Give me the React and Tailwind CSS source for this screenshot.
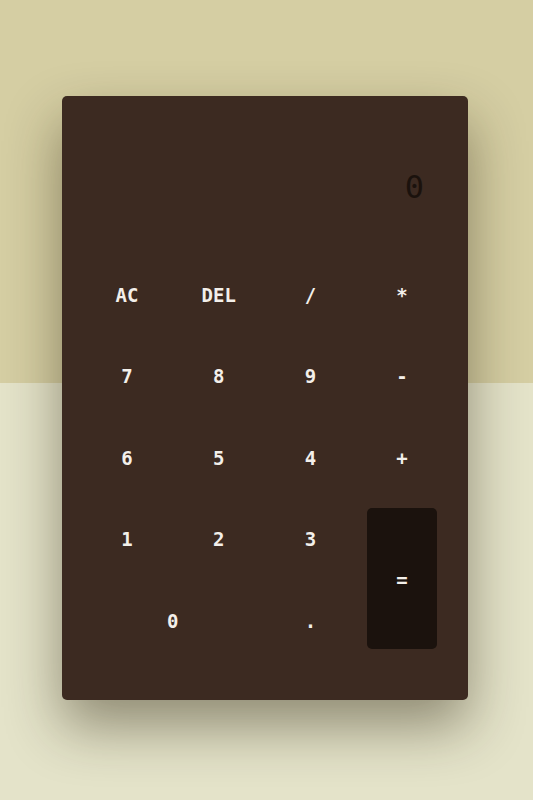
import React, { useState } from "react";

const keys = [
  { label: "AC" },
  { label: "DEL" },
  { label: "/" },
  { label: "*" },
  { label: "7" },
  { label: "8" },
  { label: "9" },
  { label: "-" },
  { label: "6" },
  { label: "5" },
  { label: "4" },
  { label: "+" },
  { label: "1" },
  { label: "2" },
  { label: "3" },
  { label: "=", cls: "row-span-2 bg-[#1b120d] rounded-[5px]" },
  { label: "0", cls: "col-span-2" },
  { label: "." },
];

const App = () => {
  const [value] = useState("0");

  return (
    <div className="min-h-screen w-full bg-[linear-gradient(to_bottom,#d5cea3_0px,#d5cea3_383px,#e4e3c9_383px,#e4e3c9_100%)] flex justify-center pt-[96px] pr-[3px] font-['DejaVu_Sans_Mono',monospace]">
      {/* Calculator */}
      <div className="w-[406px] h-[604px] bg-[#3c2a21] rounded-[5px] shadow-[0_26px_55px_rgba(40,30,10,0.45)] flex flex-col pl-[30px] pr-[31px]">
        {/* Display */}
        <div className="h-[167px] flex items-center justify-end pr-[13px] pt-[14px]">
          <span className="text-[32px] leading-none text-[#1b120d]">{value}</span>
        </div>

        {/* Keys */}
        <div className="grid grid-cols-[repeat(4,70px)] auto-rows-[60px] gap-x-[21.7px] gap-y-[21.5px]">
          {keys.map((k) => (
            <button
              key={k.label}
              className={`flex items-center justify-center pt-[4px] text-[19px] font-bold text-[#f3efea] ${k.cls || ""}`}
            >
              {k.label}
            </button>
          ))}
        </div>
      </div>
    </div>
  );
};

export default App;
